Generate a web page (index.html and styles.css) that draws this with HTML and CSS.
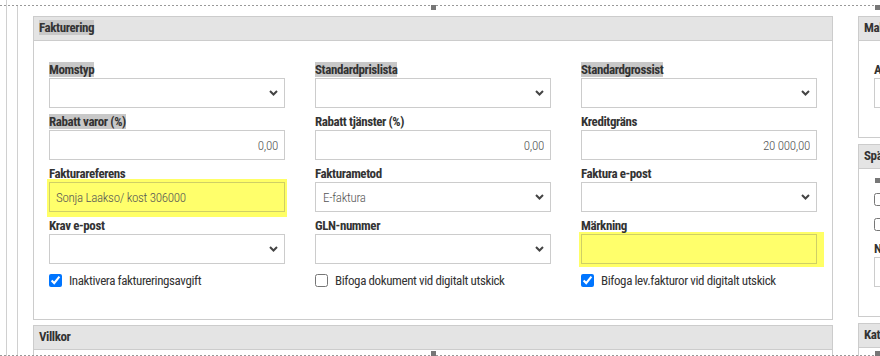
FILE: index.html
```html
<!DOCTYPE html>
<html lang="sv">
<head>
  <meta charset="UTF-8" />
  <title>Kund – Fakturering</title>
  <link rel="stylesheet" href="styles.css">
</head>
<body>
  <div class="stage">
    <div class="rail">
      <div class="rail-inner">
        <div class="cols">

          <div class="main">
            <div class="panel">
              <div class="panel-head"><span class="sel">Fakturering</span></div>
              <div class="panel-body">
                <div class="grid">
                  <div class="field">
                    <label><span class="sel">Momstyp</span></label>
                    <div class="select"><span></span><svg width="9" height="6" viewBox="0 0 9 6"><polyline points="1,1 4.5,4.5 8,1" /></svg></div>
                  </div>
                  <div class="field">
                    <label><span class="sel">Standardprislista</span></label>
                    <div class="select"><span></span><svg width="9" height="6" viewBox="0 0 9 6"><polyline points="1,1 4.5,4.5 8,1" /></svg></div>
                  </div>
                  <div class="field">
                    <label><span class="sel">Standardgrossist</span></label>
                    <div class="select"><span></span><svg width="9" height="6" viewBox="0 0 9 6"><polyline points="1,1 4.5,4.5 8,1" /></svg></div>
                  </div>

                  <div class="field">
                    <label><span class="sel">Rabatt varor (%)</span></label>
                    <input class="input num" type="text" value="0,00" />
                  </div>
                  <div class="field">
                    <label>Rabatt tjänster (%)</label>
                    <input class="input num" type="text" value="0,00" />
                  </div>
                  <div class="field">
                    <label>Kreditgräns</label>
                    <input class="input num" type="text" value="20 000,00" />
                  </div>

                  <div class="field">
                    <label>Fakturareferens</label>
                    <div class="hl hl-ref"><input class="input yellow" type="text" value="Sonja Laakso/ kost 306000" /></div>
                  </div>
                  <div class="field">
                    <label>Fakturametod</label>
                    <div class="select"><span>E-faktura</span><svg width="9" height="6" viewBox="0 0 9 6"><polyline points="1,1 4.5,4.5 8,1" /></svg></div>
                  </div>
                  <div class="field">
                    <label>Faktura e-post</label>
                    <div class="select"><span></span><svg width="9" height="6" viewBox="0 0 9 6"><polyline points="1,1 4.5,4.5 8,1" /></svg></div>
                  </div>

                  <div class="field">
                    <label>Krav e-post</label>
                    <div class="select"><span></span><svg width="9" height="6" viewBox="0 0 9 6"><polyline points="1,1 4.5,4.5 8,1" /></svg></div>
                  </div>
                  <div class="field">
                    <label>GLN-nummer</label>
                    <div class="select"><span></span><svg width="9" height="6" viewBox="0 0 9 6"><polyline points="1,1 4.5,4.5 8,1" /></svg></div>
                  </div>
                  <div class="field">
                    <label>Märkning</label>
                    <div class="hl hl-mark"><input class="input yellow" type="text" value="" /></div>
                  </div>

                  <label class="check"><input type="checkbox" checked /> Inaktivera faktureringsavgift</label>
                  <label class="check"><input type="checkbox" /> Bifoga dokument vid digitalt utskick</label>
                  <label class="check"><input type="checkbox" checked /> Bifoga lev.fakturor vid digitalt utskick</label>
                </div>
              </div>
            </div>

            <div class="panel">
              <div class="panel-head">Villkor</div>
              <div class="panel-body"></div>
            </div>
          </div>

          <div class="side">
            <div class="panel">
              <div class="panel-head">Mallar</div>
              <div class="panel-body">
                <div class="field">
                  <label>Avtal</label>
                  <input class="input" type="text" value="" />
                </div>
              </div>
            </div>
            <div class="panel">
              <div class="panel-head">Spärrar</div>
              <div class="panel-body side-checks">
                <label class="check row"><input type="checkbox" /> Kreditspärr</label>
                <label class="check row"><input type="checkbox" /> Leveransspärr</label>
                <div class="field">
                  <label>Notering</label>
                  <input class="input" type="text" value="" />
                </div>
              </div>
            </div>
            <div class="panel">
              <div class="panel-head">Kategorier</div>
              <div class="panel-body"></div>
            </div>
          </div>

        </div>
      </div>
    </div>

    <div class="marquee top"></div>
    <div class="marquee bottom"></div>
    <div class="handle h-tm"></div>
    <div class="handle h-tr"></div>
    <div class="handle h-mr"></div>
    <div class="handle h-bm"></div>
    <div class="handle h-br"></div>
  </div>
</body>
</html>
```
FILE: styles.css
```css
body {
  margin: 0;
  font-family: "Roboto Condensed", Roboto, sans-serif;
  font-size: 13px;
  letter-spacing: -0.4px;
  color: #333;
  background: #fff;
}
.stage {
  position: relative;
  width: 880px;
  height: 356px;
  overflow: hidden;
}
.rail {
  margin-left: 6px;
  padding-top: 5px;
  padding-left: 10px;
  border-left: 1px solid #d0d0d0;
  height: 351px;
}
.rail-inner {
  border-left: 1px solid #d0d0d0;
  padding-left: 15px;
  padding-top: 11px;
  height: 340px;
}
.cols {
  display: flex;
  gap: 25px;
  align-items: flex-start;
}
.main {
  width: 800px;
  flex-shrink: 0;
}
.side {
  width: 300px;
  flex-shrink: 0;
}
.panel {
  border: 1px solid #ccc;
  background: #fff;
  margin-bottom: 5px;
}
.side .panel {
  margin-bottom: 6px;
}
.panel-head {
  height: 23px;
  line-height: 22px;
  padding: 0 5px;
  background: #e4e4e4;
  border-bottom: 1px solid #ccc;
  font-weight: bold;
  white-space: nowrap;
}
.panel-body {
  padding: 21px 15px 29px;
}
.sel {
  background: #c8c8c8;
}
.grid {
  display: grid;
  grid-template-columns: repeat(3, 236px);
  column-gap: 30px;
  row-gap: 6px;
}
.field label {
  display: block;
  height: 16px;
  line-height: 16px;
  font-weight: bold;
  white-space: nowrap;
}
.input, .select {
  display: block;
  width: 100%;
  height: 30px;
  box-sizing: border-box;
  border: 1px solid #ccc;
  background: #fff;
  font-family: inherit;
  font-size: 13px;
  font-weight: 300;
  letter-spacing: -0.3px;
  color: #555;
  padding: 0 6px;
  margin: 0;
  outline: none;
}
.num {
  text-align: right;
}
.select {
  display: flex;
  align-items: center;
  justify-content: space-between;
  padding: 0 6px 0 7px;
}
.select svg {
  fill: none;
  stroke: #444;
  stroke-width: 2;
}
.hl {
  background: #ffff66;
}
.hl-ref {
  margin: -3px -2px -5px;
  padding: 3px 2px 5px;
}
.hl-mark {
  margin: -2px -7px -3px -2px;
  padding: 2px 7px 3px 2px;
}
.yellow {
  background: #ffff6b;
  border-color: #cfcf66;
}
.check {
  display: flex;
  align-items: center;
  gap: 7px;
  height: 20px;
  white-space: nowrap;
}
.check input {
  margin: 0;
  width: 13px;
  height: 13px;
}
.side-checks {
  padding-top: 18px;
}
.side-checks .row {
  height: 25px;
}
.side-checks .field {
  margin-top: 4px;
}
.marquee {
  position: absolute;
  left: 0;
  width: 880px;
  height: 1px;
  background: repeating-linear-gradient(to right, #999 0 2px, transparent 2px 4px);
}
.marquee.top { top: 5px; }
.marquee.bottom { top: 355px; }
.handle {
  position: absolute;
  width: 5px;
  height: 5px;
  background: #777;
}
.h-tm { left: 431px; top: 5px; }
.h-tr { left: 875px; top: 5px; }
.h-mr { left: 875px; top: 178px; }
.h-bm { left: 431px; top: 351px; }
.h-br { left: 875px; top: 351px; }
```
